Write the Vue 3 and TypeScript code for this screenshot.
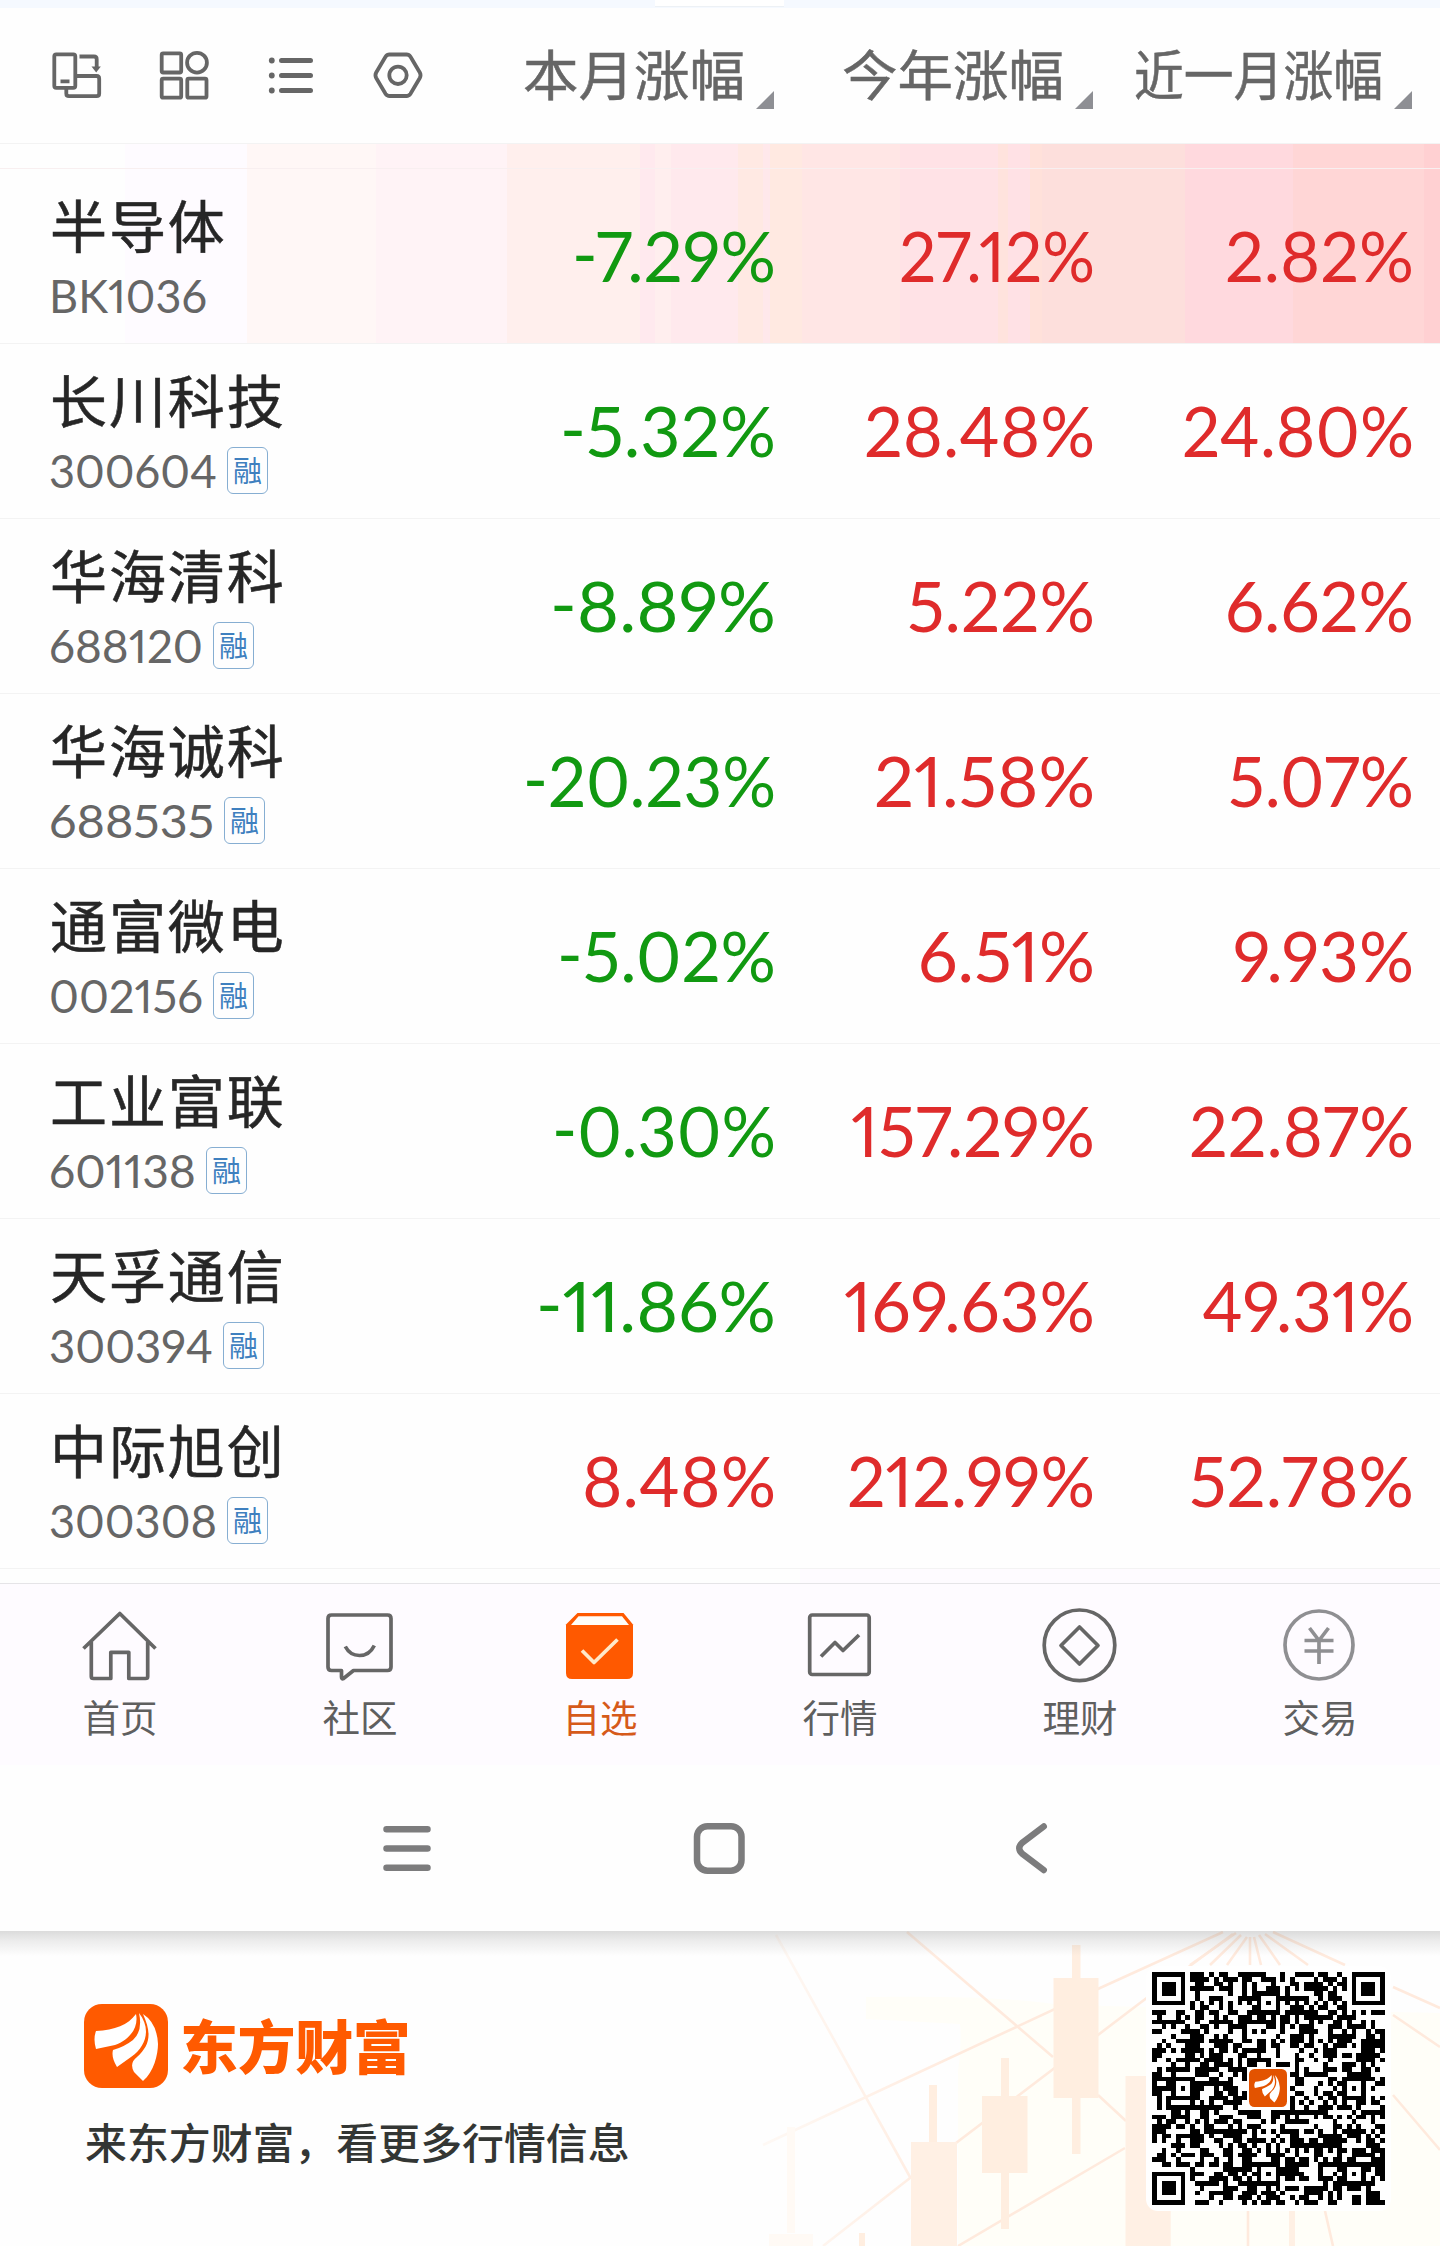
<script setup lang="ts">
interface Cell { text: string; width: number }
interface Stock { name: string; code: Cell; margin: boolean; values: Cell[] }

const c = (text: string, width: number): Cell => ({ text, width })

const columns: Cell[] = [c('本月涨幅', 222), c('今年涨幅', 222), c('近一月涨幅', 249)]

const stocks: Stock[] = [
  { name: '半导体', code: c('BK1036', 154), margin: false, values: [c('-7.29%', 199), c('27.12%', 191), c('2.82%', 184)] },
  { name: '长川科技', code: c('300604', 164), margin: true, values: [c('-5.32%', 211), c('28.48%', 226), c('24.80%', 227)] },
  { name: '华海清科', code: c('688120', 150), margin: true, values: [c('-8.89%', 221), c('5.22%', 183), c('6.62%', 184)] },
  { name: '华海诚科', code: c('688535', 161), margin: true, values: [c('-20.23%', 248), c('21.58%', 216), c('5.07%', 181)] },
  { name: '通富微电', code: c('002156', 150), margin: true, values: [c('-5.02%', 214), c('6.51%', 172), c('9.93%', 176)] },
  { name: '工业富联', code: c('601138', 143), margin: true, values: [c('-0.30%', 219), c('157.29%', 239), c('22.87%', 220)] },
  { name: '天孚通信', code: c('300394', 160), margin: true, values: [c('-11.86%', 235), c('169.63%', 246), c('49.31%', 207)] },
  { name: '中际旭创', code: c('300308', 164), margin: true, values: [c('8.48%', 189), c('212.99%', 243), c('52.78%', 220)] },
]

const tabs = [
  { id: 'home', label: '首页' },
  { id: 'community', label: '社区' },
  { id: 'watch', label: '自选' },
  { id: 'market', label: '行情' },
  { id: 'wealth', label: '理财' },
  { id: 'trade', label: '交易' },
]

// 49-module QR: finder, alignment and timing patterns over a seeded data fill
const N = 49
function buildQr(): string {
  let seed = 20231
  const rand = () => {
    seed = (seed * 1103515245 + 12345) % 2147483648
    return seed / 2147483648
  }
  const grid: boolean[][] = Array.from({ length: N }, () => Array.from({ length: N }, () => rand() < 0.53))
  for (let i = 0; i < N; i++) {
    grid[6][i] = i % 2 === 0
    grid[i][6] = i % 2 === 0
  }
  const ring = (cx: number, cy: number, outer: number, dark: (d: number) => boolean) => {
    for (let y = -outer; y <= outer; y++)
      for (let x = -outer; x <= outer; x++) {
        const px = cx + x
        const py = cy + y
        if (px >= 0 && py >= 0 && px < N && py < N) grid[py][px] = dark(Math.max(Math.abs(x), Math.abs(y)))
      }
  }
  for (const [x, y] of [[24, 6], [6, 24], [42, 24], [24, 42], [42, 42]]) ring(x, y, 2, d => d !== 1)
  for (const [x, y] of [[3, 3], [45, 3], [3, 45]]) ring(x, y, 4, d => d < 2 || d === 3)
  let d = ''
  grid.forEach((row, y) => row.forEach((on, x) => {
    const core = x >= 20 && x <= 28 && y >= 20 && y <= 28
    if (on && !core) d += `M${x} ${y}h1v1h-1z`
  }))
  return d
}
const qrPath = buildQr()
</script>

<template>
  <main class="page">
    <div class="strip"><i class="strip-tab"></i></div>

    <header class="head">
      <div class="tools">
        <svg viewBox="50 48 54 54" class="tool">
          <rect x="54.3" y="54.3" width="21" height="33.5" rx="2" />
          <path d="M60.5 81.3h9M79.5 56.5h14.5q2.7 0 2.7 2.7V68M76 76h20.5q2.7 0 2.7 2.7V93.5q0 2.7-2.7 2.7H69q-2.7 0-2.7-2.7V88.5" />
          <path d="M91.5 66.5h9.3l-4.6 6z" class="solid" />
        </svg>
        <svg viewBox="157 48 54 54" class="tool">
          <rect x="161.7" y="53.3" width="19.5" height="19.2" rx="1.5" />
          <circle cx="197" cy="62.7" r="9.9" />
          <rect x="161.7" y="78.7" width="19.5" height="19" rx="1.5" />
          <rect x="187.3" y="78.7" width="19.2" height="19" rx="1.5" />
        </svg>
        <svg viewBox="264 48 54 54" class="tool">
          <path d="M281.5 60.5h29M281.500 75.500h29M281.500 90.500h29" class="bars" />
          <g class="solid"><circle cx="271.800" cy="60.500" r="2.900" /><circle cx="271.800" cy="75.500" r="2.900" /><circle cx="271.800" cy="90.500" r="2.900" /></g>
        </svg>
        <svg viewBox="371 48 54 54" class="tool">
          <path d="M389.500 54.500H406.500Q409 54.500 410.500 56.800L419.800 72.500Q421.300 75.300 419.800 78L410.500 93.700Q409 96 406.500 96H389.500Q387 96 385.500 93.700L376.200 78Q374.700 75.300 376.200 72.500L385.500 56.800Q387 54.500 389.500 54.500Z" />
          <circle cx="398" cy="75.300" r="8.700" />
        </svg>
      </div>
      <div class="cols">
        <div v-for="col in columns" :key="col.text" class="col">
          <svg :width="col.width" height="80" class="col-label">
            <text x="0" y="60" :textLength="col.width" lengthAdjust="spacingAndGlyphs">{{ col.text }}</text>
          </svg>
          <i class="corner"></i>
        </div>
      </div>
    </header>

    <section class="list">
      <div class="peek"></div>
      <article v-for="(s, i) in stocks" :key="s.name" class="row" :class="{ hot: i === 0 }">
        <div class="ident">
          <div class="name">{{ s.name }}</div>
          <div class="meta">
            <svg :width="s.code.width + 6" height="46" class="code">
              <text x="0" y="38.5" :textLength="s.code.width + 4" lengthAdjust="spacingAndGlyphs">{{ s.code.text }}</text>
            </svg>
            <span v-if="s.margin" class="badge">融</span>
          </div>
        </div>
        <div v-for="(v, k) in s.values" :key="k" class="value" :class="v.text.startsWith('-') ? 'down' : 'up'">
          <svg :width="v.width + 5" height="80">
            <text v-if="v.text.startsWith('-')" x="0" y="65" :textLength="v.width + 5" lengthAdjust="spacingAndGlyphs"><tspan dy="-3">-</tspan><tspan dy="3">{{ v.text.slice(1) }}</tspan></text>
            <text v-else x="0" y="65" :textLength="v.width + 5" lengthAdjust="spacingAndGlyphs">{{ v.text }}</text>
          </svg>
        </div>
      </article>
      <div class="tail"></div>
    </section>

    <nav class="tabs">
      <div v-for="t in tabs" :key="t.id" class="tab" :class="{ active: t.id === 'watch' }">
        <svg v-if="t.id === 'home'" viewBox="80 1606 80 80" class="ticon">
          <path d="M83.500 1648.500L119.800 1613.500L155.500 1648.500M91.300 1642V1676.500Q91.300 1678.500 93.500 1678.500H110.800V1652.300H128.800V1678.500H145.500Q147.700 1678.500 147.700 1676.500V1642" />
        </svg>
        <svg v-else-if="t.id === 'community'" viewBox="320 1606 80 80" class="ticon">
          <path d="M331.500 1615H387.500Q391 1615 391 1618.500V1667Q391 1670.500 387.500 1670.500H353.500L343.500 1678.500Q341.500 1679.500 341.500 1677V1670.500H331.500Q328 1670.500 328 1667V1618.500Q328 1615 331.500 1615ZM345.300 1646.500Q350 1655.500 359.500 1655.500Q369.500 1655.500 374.300 1645.500" />
        </svg>
        <svg v-else-if="t.id === 'watch'" viewBox="560 1606 80 80" class="ticon">
          <path d="M577.500 1613H623.500L633 1624.500V1673Q633 1679 627 1679H572Q566 1679 566 1673V1624.500Z" fill="#ff5900" stroke="none" />
          <path d="M578.500 1616.300H622L629 1625H571Z" fill="#fffdf8" stroke="none" />
          <path d="M582 1650.500L594 1662.500L617.500 1639.500" stroke="#ffe9c9" />
        </svg>
        <svg v-else-if="t.id === 'market'" viewBox="800 1606 80 80" class="ticon">
          <rect x="809.700" y="1615" width="59.500" height="59.500" rx="2.500" />
          <path d="M821 1656.500L835 1642.500L843 1650.500L859 1635" />
        </svg>
        <svg v-else-if="t.id === 'wealth'" viewBox="1040 1606 80 80" class="ticon">
          <circle cx="1079.500" cy="1645.300" r="35.300" />
          <path d="M1079.500 1627L1098 1645.500L1079.500 1664L1061 1645.500Z" />
        </svg>
        <svg v-else viewBox="1280 1606 80 80" class="ticon pale">
          <circle cx="1319" cy="1645" r="34" />
          <path d="M1309.500 1628L1319 1640.500L1328.500 1628M1319 1640V1664M1304.500 1640.500H1333.500M1304.500 1651H1333.500" />
        </svg>
        <span class="tlabel">{{ t.label }}</span>
      </div>
    </nav>

    <div class="sysbar">
      <svg width="60" height="60" viewBox="377 1818 60 60"><path d="M386.500 1829.200H427.500M386.500 1848.500H427.500M386.500 1867.700H427.500" /></svg>
      <svg width="60" height="60" viewBox="689 1818 60 60"><rect x="697" y="1826.200" width="44.500" height="44.500" rx="10.500" /></svg>
      <svg width="60" height="60" viewBox="1001 1818 60 60"><path d="M1043.700 1826.500L1022 1843Q1016.500 1848.300 1022 1853.500L1043.700 1870" /></svg>
    </div>

    <footer class="foot">
      <svg class="art" width="1440" height="315" viewBox="0 0 1440 315">
        <defs>
          <linearGradient id="fade" gradientUnits="userSpaceOnUse" x1="750" y1="0" x2="960" y2="0">
            <stop offset="0" stop-color="#ffeee2" stop-opacity=".3" /><stop offset="1" stop-color="#ffeadd" />
          </linearGradient>
        </defs>
        <path d="M866 66Q1000 64 1060 74L1440 82V315H958V140Q962 110 960 93L866 88Z" fill="#fffef8" />
        <g fill="none" stroke="url(#fade)" stroke-width="2.600">
          <path d="M776 4L910 246M907 1L1053 126M763 214L1100 57L1223 1M823 315L910 247L1140 72L1233 3M958 315L1125 217M1098 164L1126 190M1393 56L1440 77M1393 84L1440 116M1393 164L1440 219" />
          <path d="M1236 2L1190 34M1241 4L1210 34M1247 6L1227 34M1250 6V34M1254 6L1261 34M1259 4L1280 34M1265 3L1308 34M1273 1L1345 34M1248 280V315M1325 280L1333 315" />
        </g>
        <path d="M787 196h8v106h-8zM769 303h44v12h-44z" fill="#fffaf5" />
        <path d="M859 302h6v13h-6zM929 154h8v57h-8zM1001 127h8v171h-8zM982 165h45.500v77H982zM1072 14h8.500v209H1072zM1053.500 47h45v120h-45z" fill="#ffeee0" />
        <path d="M911 211h46v104h-46zM1125.500 145h45.200v170h-45.200zM1289 280h6v35h-6z" fill="#fff0e4" />
      </svg>
      <div class="brand">
        <div class="logo-line">
          <svg class="logo" viewBox="0 0 84 84">
            <rect width="84" height="84" rx="18" fill="#ff5a00" />
            <g fill="#fff">
              <path d="M52 10C44 21 31 26 12 27Q9 35 12 45L31 41C45 36 55 24 52 10Z" />
              <path d="M55 9Q59 27 49 36Q40 43 29 46Q27 53 33 63L47 53C63 42 67 24 55 9Z" />
              <path d="M59 10C68 30 66 41 53 53Q45 59 50 68L59 77C70 68 74 50 74 40Q73 19 59 10Z" />
            </g>
          </svg>
          <span class="brand-name">东方财富</span>
        </div>
        <div class="slogan">来东方财富，看更多行情信息</div>
      </div>
      <div class="qr-card">
        <svg width="233" height="233" :viewBox="`0 0 ${N} ${N}`" shape-rendering="crispEdges"><path :d="qrPath" /></svg>
        <svg class="qr-logo" viewBox="0 0 84 84">
          <rect width="84" height="84" rx="12" fill="#e35300" />
          <g fill="#fff" transform="translate(2 1)">
            <path d="M48 12C40 22 29 25 12 27Q8 33 11 41L29 37C43 32 50 22 48 12Z" />
            <path d="M51 12Q54 26 45 34Q36 40 27 43Q26 52 33 60L44 50C56 40 59 26 51 12Z" />
            <path d="M55 12C61 28 59 39 48 49Q41 56 45 64L54 73C63 64 67 47 66 39Q64 20 55 12Z" />
          </g>
        </svg>
      </div>
      <div class="shade"></div>
    </footer>
  </main>
</template>

<style>
body { margin: 0; background: #fff; }
</style>

<style scoped>
.page {
  width: 1440px; height: 2246px; overflow: hidden; background: #fefefe;
  font-family: "Noto Sans CJK SC", "Noto Sans", sans-serif; color: #262626;
}
svg { display: block; flex: none; }
.strip { height: 8px; background: #f5f9ff; display: flex; }
.strip-tab { width: 129px; height: 7px; margin-left: 655px; background: #fff; border-bottom: 1px solid #edf1f5; box-sizing: border-box; }
.head { height: 136px; box-sizing: border-box; border-bottom: 1px solid #f3f3f3; display: flex; }
.tools { display: flex; gap: 53px; padding: 40px 0 0 50px; width: 405px; flex: none; }
.tool { width: 54px; height: 54px; fill: none; stroke: #666; stroke-width: 3.8; }
.tool .solid { fill: #666; stroke: none; }
.tool .bars { stroke-width: 5; stroke-linecap: round; }
.cols { display: flex; padding-left: 50px; }
.tools { margin-right: -50px; }
.col { width: 319px; display: flex; justify-content: flex-end; align-items: flex-start; padding-top: 28px; box-sizing: border-box; }
.col-label { height: 72px; overflow: visible; font-size: 54px; }
.col-label text { fill: #666; stroke: #666; stroke-width: .5px; }
.corner { width: 18px; height: 18px; margin: 55px 0 0 11px; background: #8e8f94; clip-path: polygon(100% 0, 100% 100%, 0 100%); }
.peek, .row.hot {
  background: linear-gradient(90deg, #fefefe 125px, #fefbff 125px 247px, #fff7f6 247px 376px, #fff3f6 376px 507px,
    #ffefed 507px 640px, #ffe9ee 640px 655px, #ffeeee 655px 671px, #ffe9ed 671px 738px, #ffe9e3 738px 763px,
    #ffe8eb 763px 770px, #ffe9e1 770px 802px, #ffe6e5 802px 900px, #ffe2e6 900px 998px, #ffe3dd 998px 1008px,
    #ffe1e5 1008px 1030px, #ffe1da 1030px 1042px, #fddfdc 1042px 1185px, #ffd9de 1185px 1293px,
    #ffd6d6 1293px 1424px, #ffd0d2 1424px);
}
.peek { height: 25px; box-sizing: border-box; border-bottom: 1px solid #f8eff0; }
.row { height: 175px; box-sizing: border-box; border-bottom: 1.500px solid #f3f3f3; display: flex; }
.ident { width: 455px; flex: none; padding-left: 50px; box-sizing: border-box; }
.name {
  font-size: 57px; line-height: 84px; letter-spacing: 1.900px; padding-top: 12px; height: 89px; box-sizing: border-box;
  white-space: nowrap; -webkit-text-stroke: .5px #262626;
}
.meta { display: flex; align-items: flex-start; height: 50px; padding-top: 12px; }
.code { margin-top: 4px; margin-left: -1px; overflow: visible; font: 46px Lato, sans-serif; font-feature-settings: "pnum"; }
.code text { fill: #666; }
.badge {
  width: 41px; height: 47px; box-sizing: border-box; margin: 2px 0 0 8px; border: 1.500px solid #86aed2; border-radius: 6px;
  color: #3f80bf; font-size: 29px; line-height: 43px; text-align: center;
}
.value { width: 319px; display: flex; justify-content: flex-end; padding-top: 48px; box-sizing: border-box; }
.value svg { overflow: visible; margin-right: -2px; font: 69px Lato, sans-serif; font-feature-settings: "pnum"; }
.up text { fill: #df2b2b; }
.down text { fill: #119911; }
.tail { height: 14px; background: linear-gradient(90deg, #fefefe 800px, #fefbff 800px); }
.tabs { height: 182px; background: #fefbff; border-top: 1.500px solid #e5e4e7; box-sizing: border-box; display: flex; }
.tab { width: 240px; display: flex; flex-direction: column; align-items: center; padding-top: 22px; box-sizing: border-box; }
.ticon { width: 80px; height: 80px; fill: none; stroke: #666; stroke-width: 3.700; stroke-linejoin: round; }
.ticon.pale { stroke: #8f8f92; }
.tlabel { font-size: 37.500px; line-height: 54px; color: #5f5f5f; margin-top: 3px; }
.active .tlabel { color: #d65a1a; }
.sysbar { height: 166px; box-sizing: border-box; padding: 53px 0 0 377px; display: flex; gap: 252px; }
.sysbar svg { fill: none; stroke: #7c7c7d; stroke-width: 6.500; stroke-linecap: round; }
.foot { height: 315px; position: relative; display: flex; justify-content: space-between; overflow: hidden; }
.art { position: absolute; left: 0; top: 0; }
.shade { position: absolute; left: 0; top: 0; width: 100%; height: 25px; background: linear-gradient(rgba(60, 60, 60, .18), rgba(80, 80, 80, .1) 10px, rgba(120, 120, 120, 0)); }
.brand { position: relative; padding: 73px 0 0 84px; }
.logo-line { display: flex; align-items: center; height: 84px; }
.logo { width: 84px; height: 84px; }
.brand-name { font-size: 58px; font-weight: 900; line-height: 84px; letter-spacing: -.4px; color: #ff5a00; margin: -4px 0 0 12px; }
.slogan { font-size: 41.900px; font-weight: 500; line-height: 60px; margin: 23px 0 0 1px; color: #333634; white-space: nowrap; }
.qr-card { position: relative; width: 245px; height: 245px; box-sizing: border-box; padding: 6px; margin: 35px 49px 0 0; border-radius: 12px; background: #fff; }
.qr-logo { position: absolute; left: 103px; top: 103px; width: 38px; height: 38px; }
</style>
